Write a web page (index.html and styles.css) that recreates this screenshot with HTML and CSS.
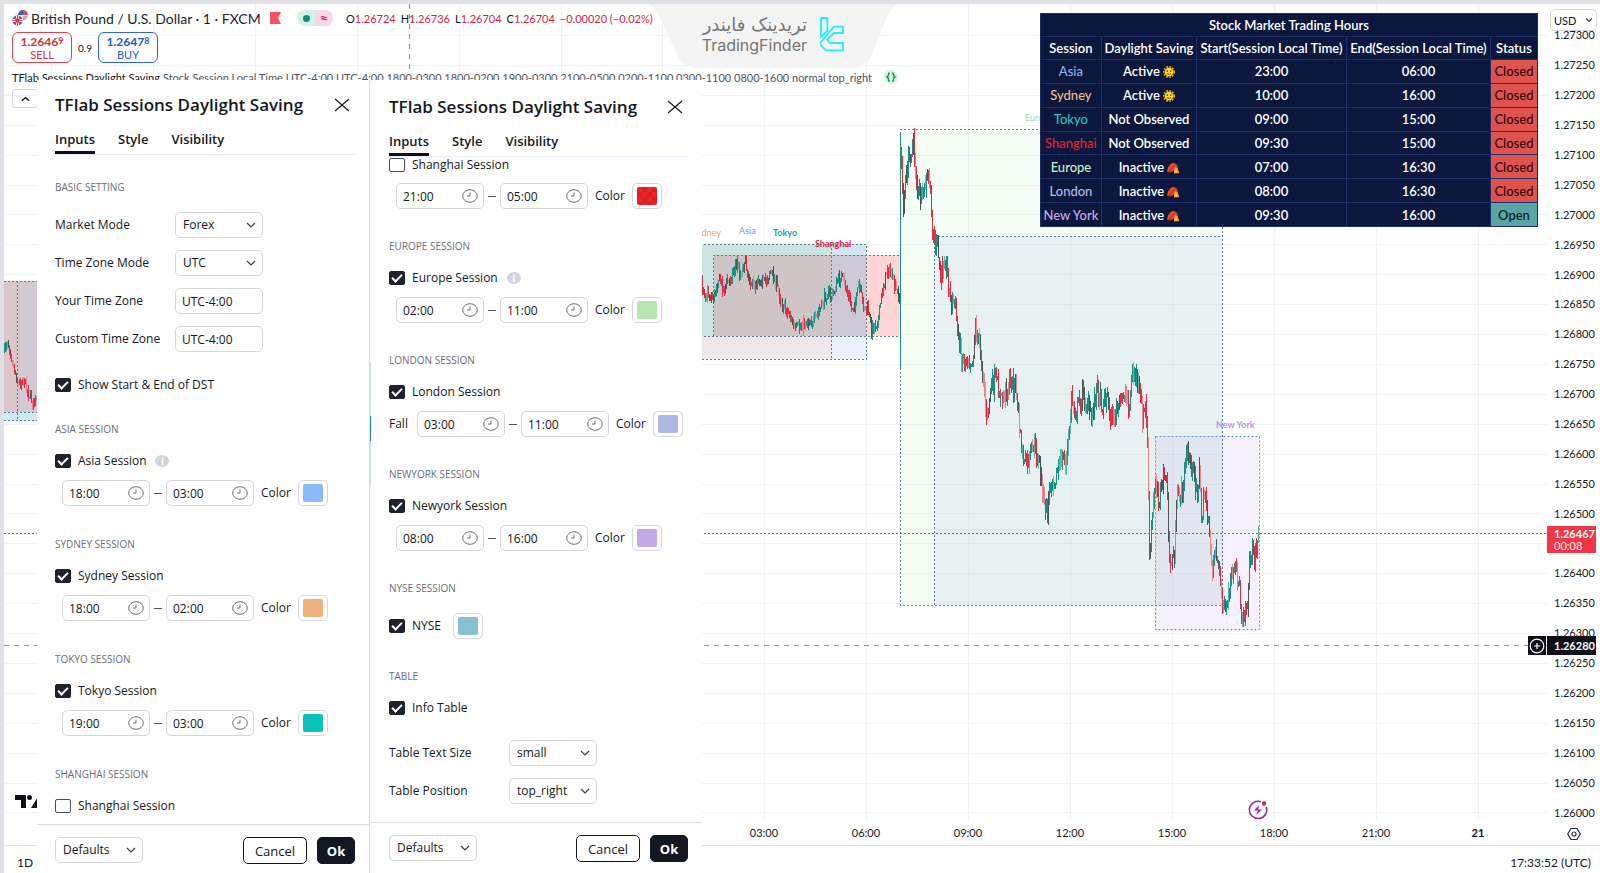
FILE: index.html
```html
<!DOCTYPE html>
<html lang="en">
<head>
<meta charset="utf-8">
<title>GBPUSD chart</title>
<link rel="stylesheet" href="styles.css">
</head>
<body>
<div class="app">
  <main class="chart">
    <svg class="plot" id="plot" viewBox="4 4 1543 841" preserveAspectRatio="none" aria-hidden="true">
      <g id="grid" class="grid"></g>
      <g>
        <rect x="4" y="281" width="13" height="131" fill="#dbc7ca"/>
        <rect x="17" y="281" width="300" height="131" fill="#d3c9d3"/>
        <rect x="4" y="412" width="300" height="9" fill="#cdebf0"/>
        <path class="dots" d="M4 281.5H60M4 412.5H60M4 420.5H60M17.5 281V421"/>
        <rect x="360" y="362" width="20" height="125" fill="#cfdfe3"/>
        <rect x="360" y="416" width="20" height="25" fill="#1f9384"/>
        <rect x="600" y="244" width="231" height="92" fill="#cbe5e3"/>
        <rect x="831" y="244" width="35" height="92" fill="#cfe6f3"/>
        <rect x="600" y="336" width="231" height="23" fill="#efe9ec"/>
        <rect x="831" y="336" width="35" height="23" fill="#eaf1fd"/>
        <rect x="714" y="255" width="117" height="81" fill="#cfc5c6"/>
        <rect x="831" y="255" width="35" height="81" fill="#cdc8d5"/>
        <rect x="866" y="255" width="34" height="81" fill="#ffd5d5"/>
        <rect x="900" y="130" width="323" height="476" fill="#f3fdf3"/>
        <rect x="934" y="236" width="289" height="370" fill="#e8f1f2"/>
        <rect x="1155" y="437" width="104" height="192" fill="#f6f1fd"/>
        <rect x="1155" y="437" width="68" height="168" fill="#e2e6f1"/>
        <path class="dots" d="M700 244.5H866.5V359.5H700M831.5 244V359M700 336.5H900M713.5 336V255.5H900"/>
        <path class="dots" d="M900.5 606V129.5H1222.5V605.5H900M934.5 605V236.5H1222"/>
        <path class="dots blue" d="M1155.5 436.5H1259.5V629.5H1155.5Z"/>
      </g>
      <g id="gridOver" class="grid over"></g>
      <g id="candles" class="candles"></g>
      <path class="priceline" d="M4 533.5H1547"/>
      <path class="cross" d="M4 645.5H1547M409.5 4V70"/>
      <g class="tags">
        <text x="697" y="236" fill="#e0a466">ydney</text>
        <text x="739" y="234" fill="#6f9be8">Asia</text>
        <text x="773" y="236" fill="#10a8a0" class="strong">Tokyo</text>
        <text x="815" y="247" fill="#d8253c" class="strong">Shanghai</text>
        <text x="1025" y="121" fill="#a5dba5">Europe</text>
        <text x="1216" y="428" fill="#b697dc" class="strong">New York</text>
      </g>
    </svg>

    <header class="legend">
      <div class="symbol-row">
        <svg class="pair" viewBox="0 0 16 16"><circle cx="11" cy="5" r="5" fill="#e8eefc"/><path d="M11 0a5 5 0 0 1 5 5h-5z" fill="#e34a55"/><path d="M6 5a5 5 0 0 1 5-5v5z" fill="#2b62c9"/><path d="M11 7h4.500M10 9h4" stroke="#e34a55"/><circle cx="5.500" cy="10.500" r="5.500" fill="#fff"/><circle cx="5.500" cy="10.500" r="5" fill="#3a5fb5"/><path d="M5.500 5.500v10M.5 10.500h10" stroke="#fff" stroke-width="3"/><path d="M5.500 5.500v10M.5 10.500h10M2 7l7 7M9 7l-7 7" stroke="#dd3845" stroke-width="1.200"/></svg>
        <h1>British Pound / U.S. Dollar · 1 · FXCM</h1>
        <svg class="flag" viewBox="0 0 11 12"><path d="M0 0h11L8 6l3 6H0z" fill="#f7525f"/></svg>
        <span class="pill"><i class="dot"></i><b>≈</b></span>
        <span class="ohlc">O<em>1.26724</em></span>
        <span class="ohlc">H<em>1.26736</em></span>
        <span class="ohlc">L<em>1.26704</em></span>
        <span class="ohlc">C<em>1.26704</em></span>
        <span class="ohlc"><em>−0.00020 (−0.02%)</em></span>
      </div>
      <div class="trade-row">
        <button class="trade sell"><b>1.2646<small>9</small></b><span>SELL</span></button>
        <span class="spread">0.9</span>
        <button class="trade buy"><b>1.2647<small>8</small></b><span>BUY</span></button>
      </div>
      <div class="study-row"><span class="study">TFlab Sessions Daylight Saving</span><span class="args">Stock Session Local Time UTC-4:00 UTC-4:00 1800-0300 1800-0200 1900-0300 2100-0500 0200-1100 0300-1100 0800-1600 normal top_right</span><svg class="braces" viewBox="0 0 14 14"><circle cx="7" cy="7" r="7" fill="#d5f3df"/><path d="M6 3Q4.500 3 4.500 4.500T3 7Q4.500 7.500 4.500 9.500T6 11M8 3Q9.500 3 9.500 4.500T11 7Q9.500 7.500 9.500 9.500T8 11" fill="none" stroke="#159a4a" stroke-width="1.500"/></svg></div>
      <button class="collapse" aria-label="Collapse"><svg viewBox="0 0 10 6"><path d="M1 5l4-3.500L9 5" fill="none" stroke="#131722" stroke-width="1.500"/></svg></button>
    </header>

    <svg class="tv" viewBox="0 0 36 14"><path d="M0 0h11v13H6V5H0zM24 0h7l-7 13h-8z" fill="#0f0f19"/><circle cx="14.500" cy="2.500" r="2.500" fill="#0f0f19"/></svg>

    <div class="brand">
      <svg class="brand-bg" viewBox="0 0 248 64" preserveAspectRatio="none"><path d="M0 0H248Q240 6 234 22L224 48Q218 64 200 64H50Q34 64 28 50L12 16Q6 4 0 0z" fill="#f4f4f4"/></svg>
      <div class="brand-text"><span class="fa" lang="fa" dir="rtl">تریدینک فایندر</span><span class="en">TradingFinder</span></div>
      <svg class="brand-mark" viewBox="0 0 24 36"><path d="M1 1h6.300v13L1 20zM1 25L14 9.700h9V16h-9l-6.700 6.500L10 26h13v7.300H6L1 28z" fill="none" stroke="#1ff0fa" stroke-width="1.800"/></svg>
    </div>

    <table class="hours">
      <colgroup><col class="c1"><col class="c2"><col class="c3"><col class="c4"><col class="c5"></colgroup>
      <thead>
        <tr><th colspan="5">Stock Market Trading Hours</th></tr>
        <tr><th>Session</th><th>Daylight Saving</th><th>Start(Session Local Time)</th><th>End(Session Local Time)</th><th>Status</th></tr>
      </thead>
      <tbody id="hours"></tbody>
    </table>
    <svg class="bolt" viewBox="0 0 20 20"><path d="M13 1.700A8.700 8.700 0 1 0 18.300 7" fill="none" stroke="#8e24aa" stroke-width="1.500"/><path d="M11.500 5L6 10.500h4L8 15l6-5.500h-4z" fill="#8e24aa"/><circle cx="16" cy="3.500" r="2.200" fill="#e0243c"/></svg>
  </main>

  <aside class="scale">
    <div class="currency picker"><select aria-label="Currency"><option>USD</option></select><svg viewBox="0 0 10 6"><path d="M2 1.500l3 3 3-3"/></svg></div>
    <ol class="prices" id="prices"></ol>
    <div class="tag last"><b>1.26467</b><span>00:08</span></div>
    <div class="tag cursor"><button aria-label="Add"><svg viewBox="0 0 16 16"><circle cx="8" cy="8" r="6.800"/><path d="M8 5v6M5 8h6"/></svg></button><b>1.26280</b></div>
  </aside>

  <ol class="times"><li>03:00</li><li>06:00</li><li>09:00</li><li>12:00</li><li>15:00</li><li>18:00</li><li>21:00</li><li class="day">21</li></ol>
  <div class="corner"><svg viewBox="0 0 14 14"><path d="M4 1.500h6L13.300 7 10 12.500H4L.7 7z"/><circle cx="7" cy="7" r="2"/></svg></div>
  <footer class="status"><button>1D</button><time>17:33:52 (UTC)</time></footer>

  <section class="dialog first" aria-label="Indicator settings">
    <header><h2>TFlab Sessions Daylight Saving</h2><button class="close" aria-label="Close"><svg viewBox="0 0 16 14"><path d="M1 1l14 12M15 1L1 13"/></svg></button></header>
    <nav><button class="on">Inputs</button><button>Style</button><button>Visibility</button></nav>
    <div class="body">
      <h3>BASIC SETTING</h3>
      <div class="fields">
        <label for="mm">Market Mode</label><div class="picker"><select id="mm"><option>Forex</option></select><svg viewBox="0 0 10 6"><path d="M1 1l4 4 4-4"/></svg></div>
        <label for="tzm">Time Zone Mode</label><div class="picker"><select id="tzm"><option>UTC</option></select><svg viewBox="0 0 10 6"><path d="M1 1l4 4 4-4"/></svg></div>
        <label for="ytz">Your Time Zone</label><input id="ytz" type="text" value="UTC-4:00">
        <label for="ctz">Custom Time Zone</label><input id="ctz" type="text" value="UTC-4:00">
      </div>
      <label class="check dst"><input type="checkbox" checked>Show Start &amp; End of DST</label>
      <div data-session="Asia" data-from="18:00" data-to="03:00" data-color="#8abafb" data-info></div>
      <div data-session="Sydney" data-from="18:00" data-to="02:00" data-color="#efb27d"></div>
      <div data-session="Tokyo" data-from="19:00" data-to="03:00" data-color="#0bc1bd"></div>
      <div class="session"><h3>SHANGHAI SESSION</h3><label class="check"><input type="checkbox">Shanghai Session</label></div>
    </div>
    <footer><div class="picker"><select aria-label="Defaults"><option>Defaults</option></select><svg viewBox="0 0 10 6"><path d="M1 1l4 4 4-4"/></svg></div><button class="cancel">Cancel</button><button class="ok">Ok</button></footer>
  </section>

  <section class="dialog second" aria-label="Indicator settings, continued">
    <header><h2>TFlab Sessions Daylight Saving</h2><button class="close" aria-label="Close"><svg viewBox="0 0 16 14"><path d="M1 1l14 12M15 1L1 13"/></svg></button></header>
    <nav><button class="on">Inputs</button><button>Style</button><button>Visibility</button></nav>
    <div class="body">
      <div data-session="Shanghai" data-from="21:00" data-to="05:00" data-color="#f32028" data-bare></div>
      <div data-session="Europe" data-from="02:00" data-to="11:00" data-color="#b9e6b0" data-info></div>
      <div data-session="London" data-from="03:00" data-to="11:00" data-color="#adb8e6" data-prefix="Fall"></div>
      <div data-session="Newyork" data-from="08:00" data-to="16:00" data-color="#c2aae6"></div>
      <div class="session"><h3>NYSE SESSION</h3><div class="nyse"><label class="check"><input type="checkbox" checked>NYSE</label><input type="color" aria-label="NYSE color" value="#87c0d2"></div></div>
      <div class="session"><h3>TABLE</h3><label class="check"><input type="checkbox" checked>Info Table</label></div>
      <div class="fields">
        <label for="tts">Table Text Size</label><div class="picker"><select id="tts"><option>small</option></select><svg viewBox="0 0 10 6"><path d="M1 1l4 4 4-4"/></svg></div>
        <label for="tp">Table Position</label><div class="picker"><select id="tp"><option>top_right</option></select><svg viewBox="0 0 10 6"><path d="M1 1l4 4 4-4"/></svg></div>
      </div>
    </div>
    <footer><div class="picker"><select aria-label="Defaults"><option>Defaults</option></select><svg viewBox="0 0 10 6"><path d="M1 1l4 4 4-4"/></svg></div><button class="cancel">Cancel</button><button class="ok">Ok</button></footer>
  </section>
</div>
<script src="app.js"></script>
</body>
</html>
```
FILE: styles.css
```css
* { box-sizing: border-box; }
body { margin: 0; font-family: Lato, "Noto Sans", sans-serif; color: #131722; background: #fff; }
h1, h2, h3, ol { margin: 0; padding: 0; font-weight: 400; list-style: none; }
button, input, select { font: inherit; color: inherit; margin: 0; }
button { background: none; border: 0; padding: 0; }
em, i { font-style: normal; }

.app {
  position: relative;
  display: grid;
  grid-template-columns: minmax(0, 1fr) 53px;
  grid-template-rows: minmax(0, 1fr) 18px 28px;
  height: 100vh;
  overflow: hidden;
  border-top: 4px solid #dfe1e6;
  border-left: 4px solid #dfe1e6;
}

/* Chart canvas */
.chart { position: relative; grid-row: 1 / 3; grid-column: 1; min-width: 0; }
.plot { display: block; width: 100%; height: 100%; }
.grid { stroke: #f1f2f4; stroke-width: 1; }
.grid.over { stroke: #1f3f5f; stroke-opacity: .05; }
.dots { fill: none; stroke: #5f7b99; stroke-width: 1; stroke-dasharray: 2 2; }
.dots.blue { stroke: #5d8fc4; }
.priceline { stroke: #d0405c; stroke-dasharray: 2 2; }
.cross { stroke: #8b8e97; stroke-dasharray: 5 5; fill: none; }
.tags { font-size: 9px; }
.candles { shape-rendering: crispEdges; }
.tags .strong { font-weight: 700; }

.legend { position: absolute; top: 0; left: 8px; display: flex; flex-direction: column; align-items: flex-start; white-space: nowrap; }
.symbol-row { display: flex; align-items: center; height: 28px; font-size: 11px; }
.pair { width: 16px; height: 16px; margin-right: 3px; }
.symbol-row h1 { flex: none; font-size: 14px; color: #1c1f2b; width: 239px; }
.flag { width: 11px; height: 12px; margin-right: 16px; }
.pill { display: grid; grid-template-columns: 18px 18px; align-items: center; justify-items: center; height: 16px; border-radius: 8px; margin-right: 13px; background: linear-gradient(90deg, #d5f2e8 50%, #fbd5e8 50%); line-height: 16px; }
.pill .dot { width: 7px; height: 7px; border-radius: 50%; background: #0a9077; }
.pill b { color: #cf1769; font-size: 14px; }
.ohlc { margin-right: 5px; }
.ohlc em { color: #d0253f; }
.trade-row { display: flex; align-items: center; height: 31px; }
.trade { display: flex; flex-direction: column; align-items: center; justify-content: center; width: 60px; height: 31px; border: 1px solid #d8434f; border-radius: 6px; background: #fff; font-size: 11px; line-height: 13px; color: #d0303d; }
.trade b { font-size: 12px; }
.trade small { font-size: 9px; vertical-align: 2px; }
.trade.buy { border-color: #2f62dd; color: #1f55d6; }
.spread { width: 26px; text-align: center; font-size: 10px; }
.study-row { display: flex; align-items: center; gap: 3px; height: 28px; font-size: 11px; }
.args { color: #50535e; }
.braces { width: 14px; height: 14px; margin-left: 9px; }
.collapse { display: grid; place-items: center; width: 26px; height: 19px; margin-top: -2px; border: 1px solid #d1d4dc; border-radius: 3px; }
.collapse svg { width: 9px; height: 6px; }
.tv { position: absolute; left: 11px; bottom: 36px; width: 36px; height: 14px; }
.bolt { position: absolute; left: 80.600%; bottom: 25px; width: 20px; height: 20px; }

.brand { position: absolute; top: 0; left: 645px; width: 248px; height: 64px; display: flex; align-items: center; padding: 0 0 3px 55px; gap: 13px; }
.brand-bg { position: absolute; inset: 0; width: 100%; height: 100%; }
.brand-text { position: relative; display: flex; flex-direction: column; align-items: flex-end; width: 103px; color: #757575; line-height: 20px; white-space: nowrap; }
.fa { font-family: "DejaVu Sans", sans-serif; font-size: 18px; }
.en { font-family: Inter, sans-serif; font-size: 16px; }
.brand-mark { position: relative; width: 24px; height: 36px; }

.hours { position: absolute; top: 9px; right: 9px; width: 498px; height: 214px; table-layout: fixed; border-collapse: collapse; background: #0c173d; color: #fff; font-size: 13px; line-height: 22px; text-align: center; white-space: nowrap; }
.hours th, .hours td { padding: 0; border: 1px solid #1f2d6b; font-weight: 600; }
.hours .c1 { width: 61px; } .hours .c2 { width: 95px; } .hours .c3 { width: 150px; } .hours .c4 { width: 144px; } .hours .c5 { width: 47px; }
.hours td:first-child { font-weight: 500; }
.hours .asia { color: #86b5f2; } .hours .sydney { color: #f2bd8c; } .hours .tokyo { color: #22c7bf; } .hours .shanghai { color: #e02630; } .hours .europe { color: #c8efc4; } .hours .london { color: #b0bbe6; } .hours .newyork { color: #c3abe8; }
.hours .closed { background: #e0534d; color: #2a0b10; font-weight: 500; }
.hours .open { background: #58a5a5; color: #0a1b26; font-weight: 500; }
.hours svg { width: 12px; height: 12px; margin-left: 3px; vertical-align: -2px; }

/* Axes */
.scale { position: relative; grid-column: 2; grid-row: 1; background: #fff; }
.currency { position: absolute; top: 5px; left: 3px; z-index: 1; }
.prices { display: flex; flex-direction: column; height: 100%; padding-top: 16px; font-size: 11px; }
.prices li { flex: 1; display: flex; align-items: center; padding-left: 7px; }
.tag { position: absolute; right: 4px; width: 49px; padding-left: 7px; color: #fff; font-size: 11px; line-height: 13px; }
.tag.last { top: 522px; display: flex; flex-direction: column; padding-top: 1px; height: 27px; background: #f23645; }
.tag.last span { line-height: 12px; opacity: .9; }
.tag.cursor { top: 632px; height: 19px; line-height: 19px; background: #0f0f1a; }
.tag.cursor button { position: absolute; right: 50px; top: 0; display: grid; place-items: center; width: 18px; height: 19px; background: #0f0f1a; }
.tag svg { width: 16px; height: 16px; fill: none; stroke: #fff; stroke-width: 1.200; }
.times { position: relative; grid-column: 1; grid-row: 2; display: flex; padding-left: 709px; font-size: 11px; }
.times li { width: 102px; flex: none; text-align: center; line-height: 12px; }
.day { font-weight: 700; }
.corner { grid-column: 2; grid-row: 2; padding: 0 0 0 20px; line-height: 12px; }
.corner svg { width: 14px; height: 14px; fill: none; stroke: #2a2e39; stroke-width: 1.200; }
.status { grid-column: 1 / 3; grid-row: 3; display: flex; justify-content: space-between; align-items: center; padding: 6px 9px 0 13px; border-top: 1px solid #e0e3eb; font-size: 12px; }

/* Settings dialogs */
.dialog { position: absolute; top: 76px; bottom: 0; display: flex; flex-direction: column; background: #fff; font: 500 12px/16px "Open Sans", "Noto Sans", sans-serif; border-right: 1px solid #d9dbe0; }
.first { left: 33px; width: 333px; --gap: 30px; --top: 14px; --foot: 49px; }
.second { left: 367px; width: 331px; --gap: 29px; --top: 16px; --foot: 51px; border-right: 0; }
.dialog > header { display: flex; justify-content: space-between; align-items: center; padding: var(--top) 19px 0 18px; }
.dialog h2 { font-size: 17px; line-height: 22px; font-weight: 600; }
.close svg { display: block; width: 16px; height: 14px; fill: none; stroke: #131722; stroke-width: 1.200; }
.dialog nav { display: flex; gap: 23px; margin: 14px 14px 0 18px; border-bottom: 1px solid #e8eaf6; font-weight: 600; font-size: 13px; }
.dialog nav button { height: 24px; padding-bottom: 4px; border-bottom: 3px solid transparent; line-height: 16px; }
.dialog nav .on { border-color: #0f0f19; }
.body { flex: 1; min-height: 0; overflow: hidden; padding: 0 18px; }
.first .body { padding-top: 24px; }
.dialog h3 { font-size: 10px; line-height: 16px; color: #6a6d78; }
.fields { display: grid; grid-template-columns: 120px 88px; gap: 12px 0; align-items: center; margin-top: 17px; }
.second .fields { margin-top: 22px; }
.dialog input[type="text"], .picker { width: 88px; height: 26px; border: 1px solid #d4d6dc; border-radius: 5px; background: #fff; }
.dialog input[type="text"] { padding: 0 6px; }
.picker { display: grid; grid-template-columns: 1fr 10px; align-items: center; padding-right: 6px; }
.picker select { grid-area: 1 / 1 / 2 / 3; width: 100%; height: 100%; padding: 0 0 0 7px; border: 0; background: none; appearance: none; }
.picker svg { grid-area: 1 / 2; width: 10px; height: 6px; fill: none; stroke: #3a3d48; stroke-width: 1.200; pointer-events: none; }
.currency.picker { width: 47px; height: 22px; padding-right: 2px; font-size: 11px; }
.currency select { padding-left: 3px; }
.check { display: flex; align-items: center; gap: 7px; height: 20px; }
.check input { appearance: none; width: 16px; height: 14px; border: 1px solid #4a4d57; border-radius: 2px; background: #fff; display: grid; place-items: center; }
.check input:checked { background: #1e222d; border-color: #1e222d; }
.check input:checked::after { content: ""; width: 8px; height: 4px; margin-top: -2px; border-left: 2px solid #fff; border-bottom: 2px solid #fff; transform: rotate(-45deg); }
.dst { margin-top: 23px; }
.session { margin-top: var(--gap); }
.dst + .session { margin-top: 26px; }
.session .check { margin-top: 14px; }
.session.bare { margin-top: 0; }
.session.bare .check { margin-top: 0; height: 16px; }
.session.bare .range { margin-top: 10px; }
.info { width: 14px; height: 12px; margin-left: 2px; border-radius: 50%; background: #d1d4dc; color: #fff; font-size: 10px; line-height: 12px; text-align: center; font-weight: 700; }
.range { display: flex; align-items: center; height: 26px; margin-top: 9px; padding-left: 7px; }
.range.named { padding-left: 0; }
.range .prefix { width: 28px; }
.time { display: grid; grid-template-columns: minmax(0, 1fr) 22px; align-items: center; width: 88px; }
.time input { grid-area: 1 / 1 / 2 / 3; }
.time svg { grid-area: 1 / 2; width: 16px; height: 14px; fill: none; stroke: #6a6d78; pointer-events: none; }
.dash { width: 8px; height: 1px; margin: 0 4px; background: #50535e; }
.hue { display: flex; align-items: center; gap: 7px; margin-left: 7px; }
input[type="color"] { appearance: none; width: 30px; height: 26px; padding: 3px 4px; border: 1px solid #d4d6e4; border-radius: 5px; background: #fff; }
input[type="color"]::-webkit-color-swatch-wrapper { padding: 0; }
input[type="color"]::-webkit-color-swatch { border: 0; border-radius: 2px; }
.bare input[type="color"]::-webkit-color-swatch { background-image: repeating-conic-gradient(#d81f24 0 25%, transparent 0 50%); background-size: 10px 10px; }
.nyse { display: flex; align-items: center; gap: 12px; height: 26px; margin-top: 17px; }
.session .nyse .check { margin-top: 0; }
.dialog > footer { display: flex; align-items: flex-start; gap: 10px; height: var(--foot); padding: 12px 14px 0 18px; border-top: 1px solid #dcdee4; }
.dialog > footer .picker { margin-right: auto; }
.cancel, .ok { height: 27px; border: 1px solid #131722; border-radius: 5px; font-size: 13px; font-weight: 500; }
.cancel { width: 64px; }
.ok { width: 38px; background: #131722; color: #fff; font-weight: 700; }
```
FILE: app.js
```js
const NS = "http://www.w3.org/2000/svg";

function line(parent, x1, y1, x2, y2, color) {
  const el = document.createElementNS(NS, "path");
  el.setAttribute("d", `M${x1} ${y1}L${x2} ${y2}`);
  if (color) el.setAttribute("stroke", color);
  parent.appendChild(el);
}

// Grid lines and price scale
for (const id of ["grid", "gridOver"]) {
  const g = document.getElementById(id);
  const over = id === "gridOver";
  for (let i = 0; i < 27; i++) {
    const y = Math.round(35 + 29.9 * i) + 0.5;
    if (over && (y < 130 || y > 606)) continue;
    line(g, over ? 900 : 4, y, over ? 1222 : 1547, y);
  }
  for (let k = 0; k < 15; k++) {
    const x = Math.round(51 + 101.9 * k) + 0.5;
    if (over && (x < 900 || x > 1250)) continue;
    line(g, x, over ? 130 : 4, x, over ? 606 : 820);
  }
}
const LAST_PRICE_ROW = 17; // covered by the last-price tag
const prices = document.getElementById("prices");
for (let i = 0; i < 27; i++) {
  const li = document.createElement("li");
  if (i !== LAST_PRICE_ROW) li.textContent = (1.273 - i * 0.0005).toFixed(5);
  prices.appendChild(li);
}

// Candles
let seed = 7;
const rnd = () => (seed = (seed * 16807) % 2147483647) / 2147483647;
const candles = document.getElementById("candles");
function walk(points, wick) {
  let prev = points[0][1];
  for (let p = 1; p < points.length; p++) {
    const [x0, y0] = points[p - 1], [x1, y1] = points[p];
    for (let x = x0; x < x1; x++) {
      const next = y0 + (y1 - y0) * (x + 1 - x0) / (x1 - x0) + (rnd() - 0.5) * wick;
      const up = next < prev;
      const tone = rnd();
      const color = tone < 0.18 ? "#4c5656" : tone < 0.36 ? (up ? "#5fb3a6" : "#ee8490") : up ? "#149382" : "#df2e44";
      const hi = Math.min(prev, next) - rnd() * wick * 0.5;
      const lo = Math.max(prev, next) + rnd() * wick * 0.5;
      line(candles, x + 0.5, hi, x + 0.5, lo, color);
      prev = next;
    }
  }
}
walk([[4,352],[8,340],[11,352],[15,370],[19,385],[24,378],[28,390],[33,402],[40,400]], 10);
walk([[702,281],[706,294],[714,298],[719,278],[724,288],[730,280],[737,263],[741,275],[745,259],[748,272],[754,288],[759,277],[765,283],[771,270],[776,282],[783,304],[790,314],[795,330],[800,328],[809,320],[815,322],[822,306],[827,294],[833,296],[838,282],[842,276],[847,290],[852,308],[857,300],[859,285],[864,305],[869,312],[872,330],[879,318],[883,290],[888,268],[892,276],[896,290],[900,297]], 12);
line(candles, 900.5, 133, 900.5, 368, "#1b9384");
walk([[901,150],[904,205],[907,175],[911,150],[914,145],[918,190],[922,200],[927,182],[930,178],[932,220],[935,240],[938,248],[941,280],[945,255],[948,275],[951,300],[955,300],[958,330],[963,360],[968,358],[973,360],[976,327],[980,345],[984,375],[987,422],[991,390],[996,380],[1002,400],[1007,388],[1012,382],[1017,390],[1021,440],[1025,465],[1030,460],[1034,445],[1040,465],[1045,505],[1048,511],[1051,480],[1057,475],[1062,460],[1067,460],[1070,430],[1072,397],[1076,412],[1083,395],[1088,405],[1092,420],[1097,385],[1103,405],[1107,394],[1112,420],[1118,410],[1125,392],[1130,405],[1133,375],[1137,375],[1140,392],[1143,420],[1146,405],[1148,440],[1149,500],[1150,560],[1152,530],[1156,478],[1160,500],[1165,470],[1168,500],[1170,565],[1175,555],[1178,495],[1183,490],[1188,450],[1193,470],[1198,490],[1200,470],[1202,520],[1206,490],[1210,540],[1213,565],[1216,545],[1222,590],[1226,618],[1230,590],[1234,575],[1237,570],[1240,590],[1242,617],[1248,600],[1251,552],[1255,555],[1259,533]], 19);

// Trading hours
const sun = '<svg viewBox="0 0 14 14"><circle cx="7" cy="7" r="6" fill="none" stroke="#f0b90e" stroke-width="2" stroke-dasharray="2 1.500"/><circle cx="7" cy="7" r="5" fill="#ffd92e"/><circle cx="5" cy="6" r=".9" fill="#493c12"/><circle cx="9" cy="6" r=".9" fill="#493c12"/><path d="M4.500 9q2.500 1.500 5 0" fill="none" stroke="#493c12"/></svg>';
const leaf = '<svg viewBox="0 0 14 14"><path d="M0 11q1-8 7-10 6 1 6 8l-2 3-3-2-4 2z" fill="#e8482a"/><path d="M9 6q5 2 5 7H8z" fill="#f7b52c"/><path d="M1 13l8-9" stroke="#8a2415"/></svg>';
const rows = [["Asia", "Active", "23:00", "06:00"], ["Sydney", "Active", "10:00", "16:00"], ["Tokyo", "Not Observed", "09:00", "15:00"], ["Shanghai", "Not Observed", "09:30", "15:00"], ["Europe", "Inactive", "07:00", "16:30"], ["London", "Inactive", "08:00", "16:30"], ["New York", "Inactive", "09:30", "16:00"]];
document.getElementById("hours").innerHTML = rows.map(([n, s, a, b]) => {
  const icon = s === "Active" ? sun : s === "Inactive" ? leaf : "";
  const state = n === "New York" ? "Open" : "Closed";
  return `<tr><td class="${n.toLowerCase().replace(" ", "")}">${n}</td><td>${s}${icon}</td><td>${a}</td><td>${b}</td><td class="${state.toLowerCase()}">${state}</td></tr>`;
}).join("");

// Session blocks
const clock = '<svg viewBox="0 0 16 14"><ellipse cx="8" cy="7" rx="7.300" ry="6.300"/><path d="M8 3.500V7H5"/></svg>';
document.querySelectorAll("[data-session]").forEach((el) => {
  const d = el.dataset, bare = "bare" in d, name = d.session + " Session";
  const time = (v, l) => `<div class="time"><input type="text" value="${v}" aria-label="${name} ${l}">${clock}</div>`;
  el.className = bare ? "session bare" : "session";
  el.innerHTML = (bare ? "" : `<h3>${name.toUpperCase()}</h3>`) +
    `<label class="check"><input type="checkbox"${bare ? "" : " checked"}>${name}${"info" in d ? '<span class="info">i</span>' : ""}</label>` +
    `<div class="range${d.prefix ? " named" : ""}">${d.prefix ? `<span class="prefix">${d.prefix}</span>` : ""}${time(d.from, "start")}<span class="dash"></span>${time(d.to, "end")}<label class="hue">Color<input type="color" value="${d.color}"></label></div>`;
});
```
